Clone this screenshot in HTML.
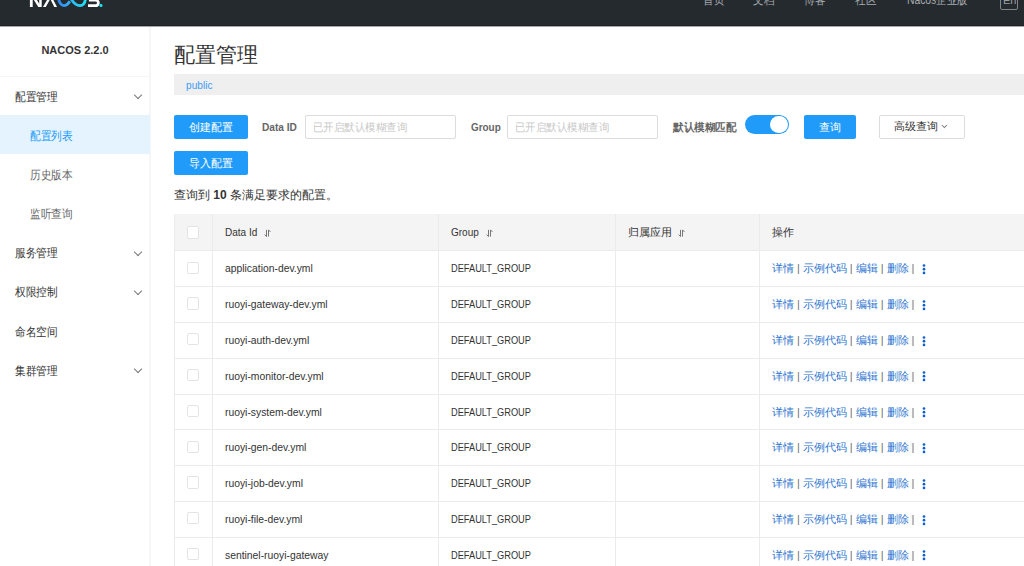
<!DOCTYPE html>
<html><head><meta charset="utf-8">
<style>
*{box-sizing:border-box;margin:0;padding:0}
html,body{width:1024px;height:566px;overflow:hidden;background:#fff;font-family:"Liberation Sans",sans-serif;color:#333;font-size:12px}
.a{position:absolute;white-space:nowrap;transform-origin:0 50%}
.cj{display:inline-block;transform-origin:0 50%}
#hdr{position:absolute;left:0;top:0;width:1024px;height:26px;background:#252a2f;overflow:hidden}
.nav{position:absolute;top:-7px;font-size:12px;line-height:14px;color:#a8acb0;transform-origin:0 50%;transform:scaleX(.88)}
.mi{position:absolute;left:15px;font-size:12px;line-height:14px;color:#333}
.sub{left:30px;color:#666}
.chev{position:absolute;left:135px;width:6px;height:6px;border-right:1px solid #777;border-bottom:1px solid #777;transform:rotate(45deg)}
.btn{position:absolute;height:24px;line-height:24px;text-align:center;background:#209bfa;color:#fff;font-size:11px;border-radius:2px}
.lbl{position:absolute;transform-origin:0 50%;font-weight:bold;color:#666;font-size:11px;line-height:14px}
.inp{position:absolute;height:24px;border:1px solid #dcdcdc;border-radius:2px;background:#fff}
.ph{position:absolute;left:6.5px;top:4px;transform-origin:0 50%;transform:scaleX(.95);color:#c8c8c8;font-size:11px;line-height:14px}
.hl{position:absolute;left:174px;width:850px;height:1px;background:#ebebeb}
.vl{position:absolute;width:1px;background:#ebebeb}
.cb{position:absolute;left:187px;width:12px;height:12.4px;border:1px solid #e4e4e4;border-radius:2px;background:#fff}
.tx{position:absolute;transform-origin:0 50%;font-size:11px;line-height:14px;color:#333}
.op{position:absolute;left:772px;font-size:11px;line-height:14px;color:#2c74d0}
.op i{font-style:normal;color:#707070;padding:0 3px}
.dots{position:absolute;left:922.5px;width:3px;height:10px}
.dots b{position:absolute;left:0;width:2.8px;height:2.8px;background:#0f5fd0;border-radius:50%}
</style></head><body>

<div id="hdr">
<svg class="a" style="left:0;top:0" width="120" height="26" viewBox="0 0 120 26">
 <defs>
  <linearGradient id="gb" x1="0" x2="1"><stop offset="0" stop-color="#2f86f2"/><stop offset="1" stop-color="#33b0f4"/></linearGradient>
  <linearGradient id="gc" x1="0" x2="1"><stop offset="0" stop-color="#2cb8f2"/><stop offset="1" stop-color="#1fe2f5"/></linearGradient>
 </defs>
 <rect x="29.9" y="-12" width="2.8" height="19" fill="#fff"/>
 <polygon points="32.0,-3 35.2,-3 41.1,7 38.3,7" fill="#fff"/>
 <rect x="39.2" y="-12" width="2.5" height="19" fill="#fff"/>
 <polygon points="43,7 45.8,7 51.3,-3 48.7,-3" fill="#fff"/>
 <polygon points="49.3,-3 51.8,-3 57,7 54.3,7" fill="#fff"/>
 <path d="M58.4 -4 C58.4 2.5 61.5 5.6 63.8 5.6 C66.2 5.6 68.2 4 69.8 1.2" stroke="url(#gb)" stroke-width="2.8" fill="none"/>
 <path d="M70.6 -2 C73 2.5 76.2 5.6 80 5.6 C83.6 5.6 85.6 3 85.6 -4" stroke="url(#gc)" stroke-width="2.8" fill="none"/>
 <path d="M88.9 0.2 H95.6 A2.75 2.75 0 0 1 95.6 5.7 H88" stroke="#fff" stroke-width="2.8" fill="none"/>
 <rect x="99.4" y="4.1" width="3.1" height="3" rx="1.4" fill="#1fe2f5"/>
</svg>
<div class="nav" style="left:703px">首页</div>
<div class="nav" style="left:753px">文档</div>
<div class="nav" style="left:804px">博客</div>
<div class="nav" style="left:855px">社区</div>
<div class="nav" style="left:907px;transform:scaleX(.86)">Nacos企业版</div>
<div class="a" style="left:1000px;top:-9px;width:18px;height:19px;border:1px solid #80858a;border-radius:2px"></div>
<div class="nav" style="left:1003px;top:-7px;font-size:11px;transform:none;color:#9a9ea2">En</div>
</div>

<div class="a" style="left:149px;top:27px;width:2px;height:540px;background:#f6f6f6"></div>
<div class="a" style="left:0;top:25px;width:1024px;height:1px;background:#1e2125"></div>
<div class="a" style="left:0;top:26px;width:1024px;height:1px;background:#a8a8a8"></div>
<div class="a" style="left:0;top:76px;width:149px;height:1px;background:#f5f5f5"></div>
<div class="a" style="left:0;top:43px;width:150px;text-align:center;font-weight:bold;font-size:11px;line-height:14px;color:#333">NACOS 2.2.0</div>
<div class="a" style="left:0;top:115px;width:150px;height:39px;background:#e4f3fe"></div>

<div class="mi" style="top:89.5px"><span class="cj" style="transform:scaleX(.89)">配置管理</span></div>
<div class="chev" style="top:91.9px"></div>
<div class="mi sub" style="top:128.5px;color:#209bfa"><span class="cj" style="transform:scaleX(.89)">配置列表</span></div>
<div class="mi sub" style="top:167.6px"><span class="cj" style="transform:scaleX(.89)">历史版本</span></div>
<div class="mi sub" style="top:206.7px"><span class="cj" style="transform:scaleX(.89)">监听查询</span></div>
<div class="mi" style="top:246.1px"><span class="cj" style="transform:scaleX(.89)">服务管理</span></div>
<div class="chev" style="top:248.5px"></div>
<div class="mi" style="top:285.1px"><span class="cj" style="transform:scaleX(.89)">权限控制</span></div>
<div class="chev" style="top:287.5px"></div>
<div class="mi" style="top:324.5px"><span class="cj" style="transform:scaleX(.89)">命名空间</span></div>
<div class="mi" style="top:363.5px"><span class="cj" style="transform:scaleX(.89)">集群管理</span></div>
<div class="chev" style="top:365.9px"></div>
<div class="a" style="left:174px;top:40.7px;font-size:21px;line-height:28px;color:#333">配置管理</div>
<div class="a" style="left:174px;top:74px;width:850px;height:21px;background:#efefef"></div>
<div class="a" style="left:186px;top:78px;transform:scaleX(.92);font-size:11px;line-height:14px;color:#3d9cf4">public</div>
<div class="btn" style="left:174px;top:115px;width:74px">创建配置</div>
<div class="btn" style="left:174px;top:151px;width:74px">导入配置</div>
<div class="lbl" style="left:262px;top:120px;transform:scaleX(.92)">Data ID</div>
<div class="inp" style="left:305px;top:115px;width:151px"><div class="ph">已开启默认模糊查询</div></div>
<div class="lbl" style="left:470.5px;top:120px;transform:scaleX(.9)">Group</div>
<div class="inp" style="left:507px;top:115px;width:151px"><div class="ph">已开启默认模糊查询</div></div>
<div class="lbl" style="left:673px;top:120px;transform:scaleX(.96)">默认模糊匹配</div>
<div class="a" style="left:745px;top:114.6px;width:44px;height:19.3px;border-radius:10px;background:#209bfa"></div>
<div class="a" style="left:769.7px;top:115.6px;width:18px;height:17.3px;border-radius:10px;background:#fff"></div>
<div class="btn" style="left:804px;top:115px;width:52px">查询</div>
<div class="a" style="left:878.5px;top:115px;width:86px;height:24px;border:1px solid #dcdcdc;border-radius:2px;background:#fff"></div>
<div class="a" style="left:894px;top:119px;font-size:11px;line-height:14px;color:#333">高级查询</div>
<div class="a" style="left:943px;top:122.3px;width:4px;height:4px;border-right:1px solid #888;border-bottom:1px solid #888;transform:rotate(45deg)"></div>
<div class="a" style="left:174px;top:188px;font-size:12px;line-height:14px;color:#333">查询到 <b>10</b> 条满足要求的配置。</div>

<div class="a" style="left:174px;top:214px;width:850px;height:36.4px;background:#f4f4f4"></div>
<div class="hl" style="top:250.4px"></div>
<div class="hl" style="top:286.2px"></div>
<div class="hl" style="top:322.0px"></div>
<div class="hl" style="top:357.8px"></div>
<div class="hl" style="top:393.6px"></div>
<div class="hl" style="top:429.4px"></div>
<div class="hl" style="top:465.2px"></div>
<div class="hl" style="top:501.0px"></div>
<div class="hl" style="top:536.8px"></div>
<div class="hl" style="top:572.6px"></div>
<div class="vl" style="left:174px;top:214px;height:352px"></div>
<div class="vl" style="left:212px;top:214px;height:352px"></div>
<div class="vl" style="left:438px;top:214px;height:352px"></div>
<div class="vl" style="left:615px;top:214px;height:352px"></div>
<div class="vl" style="left:759px;top:214px;height:352px"></div>
<div class="cb" style="top:226.4px"></div>
<div class="tx" style="left:225px;top:225.4px;transform:scaleX(.91)">Data Id</div>
<div class="tx" style="left:451px;top:225.4px;transform:scaleX(.91)">Group</div>
<div class="tx" style="left:628px;top:225.4px">归属应用</div>
<div class="tx" style="left:772px;top:225.4px">操作</div>
<svg class="a" style="left:263px;top:229px" width="9" height="9" viewBox="0 0 9 9"><path d="M3.5 0.9 V7.6 L1.6 5.6 M5.5 7.6 V0.9 L7.4 2.9" stroke="#777" stroke-width="1" fill="none"/></svg>
<svg class="a" style="left:485px;top:229px" width="9" height="9" viewBox="0 0 9 9"><path d="M3.5 0.9 V7.6 L1.6 5.6 M5.5 7.6 V0.9 L7.4 2.9" stroke="#777" stroke-width="1" fill="none"/></svg>
<svg class="a" style="left:677px;top:229px" width="9" height="9" viewBox="0 0 9 9"><path d="M3.5 0.9 V7.6 L1.6 5.6 M5.5 7.6 V0.9 L7.4 2.9" stroke="#777" stroke-width="1" fill="none"/></svg>
<div class="cb" style="top:261.5px"></div>
<div class="tx" style="left:225px;top:261.3px;transform:scaleX(.94)">application-dev.yml</div>
<div class="tx" style="left:451px;top:261.3px;transform:scaleX(.84)">DEFAULT_GROUP</div>
<div class="op" style="top:261.3px">详情<i>|</i>示例代码<i>|</i>编辑<i>|</i>删除<i>|</i></div>
<svg class="a" style="left:922px;top:263.9px" width="4" height="11" viewBox="0 0 4 11"><circle cx="2" cy="1.5" r="1.35" fill="#0f5fd0"/><circle cx="2" cy="5.2" r="1.35" fill="#0f5fd0"/><circle cx="2" cy="8.9" r="1.35" fill="#0f5fd0"/></svg>
<div class="cb" style="top:297.3px"></div>
<div class="tx" style="left:225px;top:297.1px;transform:scaleX(.94)">ruoyi-gateway-dev.yml</div>
<div class="tx" style="left:451px;top:297.1px;transform:scaleX(.84)">DEFAULT_GROUP</div>
<div class="op" style="top:297.1px">详情<i>|</i>示例代码<i>|</i>编辑<i>|</i>删除<i>|</i></div>
<svg class="a" style="left:922px;top:299.7px" width="4" height="11" viewBox="0 0 4 11"><circle cx="2" cy="1.5" r="1.35" fill="#0f5fd0"/><circle cx="2" cy="5.2" r="1.35" fill="#0f5fd0"/><circle cx="2" cy="8.9" r="1.35" fill="#0f5fd0"/></svg>
<div class="cb" style="top:333.1px"></div>
<div class="tx" style="left:225px;top:332.9px;transform:scaleX(.94)">ruoyi-auth-dev.yml</div>
<div class="tx" style="left:451px;top:332.9px;transform:scaleX(.84)">DEFAULT_GROUP</div>
<div class="op" style="top:332.9px">详情<i>|</i>示例代码<i>|</i>编辑<i>|</i>删除<i>|</i></div>
<svg class="a" style="left:922px;top:335.5px" width="4" height="11" viewBox="0 0 4 11"><circle cx="2" cy="1.5" r="1.35" fill="#0f5fd0"/><circle cx="2" cy="5.2" r="1.35" fill="#0f5fd0"/><circle cx="2" cy="8.9" r="1.35" fill="#0f5fd0"/></svg>
<div class="cb" style="top:368.9px"></div>
<div class="tx" style="left:225px;top:368.7px;transform:scaleX(.94)">ruoyi-monitor-dev.yml</div>
<div class="tx" style="left:451px;top:368.7px;transform:scaleX(.84)">DEFAULT_GROUP</div>
<div class="op" style="top:368.7px">详情<i>|</i>示例代码<i>|</i>编辑<i>|</i>删除<i>|</i></div>
<svg class="a" style="left:922px;top:371.3px" width="4" height="11" viewBox="0 0 4 11"><circle cx="2" cy="1.5" r="1.35" fill="#0f5fd0"/><circle cx="2" cy="5.2" r="1.35" fill="#0f5fd0"/><circle cx="2" cy="8.9" r="1.35" fill="#0f5fd0"/></svg>
<div class="cb" style="top:404.7px"></div>
<div class="tx" style="left:225px;top:404.5px;transform:scaleX(.94)">ruoyi-system-dev.yml</div>
<div class="tx" style="left:451px;top:404.5px;transform:scaleX(.84)">DEFAULT_GROUP</div>
<div class="op" style="top:404.5px">详情<i>|</i>示例代码<i>|</i>编辑<i>|</i>删除<i>|</i></div>
<svg class="a" style="left:922px;top:407.1px" width="4" height="11" viewBox="0 0 4 11"><circle cx="2" cy="1.5" r="1.35" fill="#0f5fd0"/><circle cx="2" cy="5.2" r="1.35" fill="#0f5fd0"/><circle cx="2" cy="8.9" r="1.35" fill="#0f5fd0"/></svg>
<div class="cb" style="top:440.5px"></div>
<div class="tx" style="left:225px;top:440.3px;transform:scaleX(.94)">ruoyi-gen-dev.yml</div>
<div class="tx" style="left:451px;top:440.3px;transform:scaleX(.84)">DEFAULT_GROUP</div>
<div class="op" style="top:440.3px">详情<i>|</i>示例代码<i>|</i>编辑<i>|</i>删除<i>|</i></div>
<svg class="a" style="left:922px;top:442.9px" width="4" height="11" viewBox="0 0 4 11"><circle cx="2" cy="1.5" r="1.35" fill="#0f5fd0"/><circle cx="2" cy="5.2" r="1.35" fill="#0f5fd0"/><circle cx="2" cy="8.9" r="1.35" fill="#0f5fd0"/></svg>
<div class="cb" style="top:476.3px"></div>
<div class="tx" style="left:225px;top:476.1px;transform:scaleX(.94)">ruoyi-job-dev.yml</div>
<div class="tx" style="left:451px;top:476.1px;transform:scaleX(.84)">DEFAULT_GROUP</div>
<div class="op" style="top:476.1px">详情<i>|</i>示例代码<i>|</i>编辑<i>|</i>删除<i>|</i></div>
<svg class="a" style="left:922px;top:478.7px" width="4" height="11" viewBox="0 0 4 11"><circle cx="2" cy="1.5" r="1.35" fill="#0f5fd0"/><circle cx="2" cy="5.2" r="1.35" fill="#0f5fd0"/><circle cx="2" cy="8.9" r="1.35" fill="#0f5fd0"/></svg>
<div class="cb" style="top:512.1px"></div>
<div class="tx" style="left:225px;top:511.9px;transform:scaleX(.94)">ruoyi-file-dev.yml</div>
<div class="tx" style="left:451px;top:511.9px;transform:scaleX(.84)">DEFAULT_GROUP</div>
<div class="op" style="top:511.9px">详情<i>|</i>示例代码<i>|</i>编辑<i>|</i>删除<i>|</i></div>
<svg class="a" style="left:922px;top:514.5px" width="4" height="11" viewBox="0 0 4 11"><circle cx="2" cy="1.5" r="1.35" fill="#0f5fd0"/><circle cx="2" cy="5.2" r="1.35" fill="#0f5fd0"/><circle cx="2" cy="8.9" r="1.35" fill="#0f5fd0"/></svg>
<div class="cb" style="top:547.9px"></div>
<div class="tx" style="left:225px;top:547.7px;transform:scaleX(.94)">sentinel-ruoyi-gateway</div>
<div class="tx" style="left:451px;top:547.7px;transform:scaleX(.84)">DEFAULT_GROUP</div>
<div class="op" style="top:547.7px">详情<i>|</i>示例代码<i>|</i>编辑<i>|</i>删除<i>|</i></div>
<svg class="a" style="left:922px;top:550.3px" width="4" height="11" viewBox="0 0 4 11"><circle cx="2" cy="1.5" r="1.35" fill="#0f5fd0"/><circle cx="2" cy="5.2" r="1.35" fill="#0f5fd0"/><circle cx="2" cy="8.9" r="1.35" fill="#0f5fd0"/></svg>
</body></html>
